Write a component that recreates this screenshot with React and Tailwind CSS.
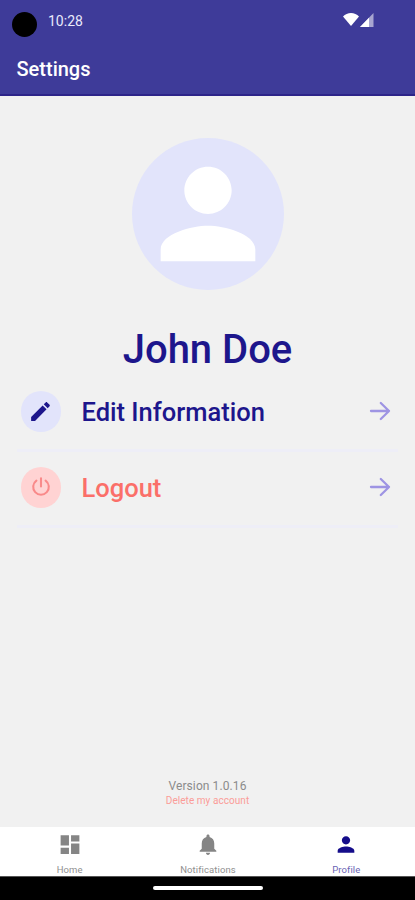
import React from 'react';

const PERSON =
  'M12 12c2.21 0 4-1.79 4-4s-1.79-4-4-4-4 1.79-4 4 1.79 4 4 4zm0 2c-2.67 0-8 1.34-8 4v2h16v-2c0-2.66-5.33-4-8-4z';
const PENCIL =
  'M3 17.25V21h3.75L17.81 9.94l-3.75-3.75L3 17.25zM20.71 7.04c.39-.39.39-1.02 0-1.41l-2.34-2.34c-.39-.39-1.02-.39-1.41 0l-1.83 1.83 3.75 3.75 1.83-1.83z';
const DASHBOARD = 'M3 13h8V3H3v10zm0 8h8v-6H3v6zm10 0h8V11h-8v10zm0-18v6h8V3h-8z';
const BELL =
  'M12 22c1.1 0 2-.9 2-2h-4c0 1.1.89 2 2 2zm6-6v-5c0-3.07-1.64-5.64-4.5-6.32V4c0-.83-.67-1.5-1.5-1.5s-1.5.67-1.5 1.5v.68C7.63 5.36 6 7.92 6 11v5l-2 2v1h16v-1l-2-2z';

function Icon({ path, className }) {
  return (
    <svg viewBox="0 0 24 24" fill="currentColor" className={className}>
      <path d={path} />
    </svg>
  );
}

function ArrowIcon() {
  return (
    <svg
      viewBox="0 0 22 20"
      fill="none"
      stroke="currentColor"
      strokeWidth="2.3"
      strokeLinecap="round"
      strokeLinejoin="round"
      className="w-[22px] h-5 text-[#9e94e3]"
    >
      <path d="M2 10h18M11.8 2l8.2 8-8.2 8" />
    </svg>
  );
}

function PowerIcon() {
  return (
    <svg
      viewBox="0 0 20 20"
      fill="none"
      stroke="currentColor"
      strokeWidth="2.1"
      strokeLinecap="round"
      className="size-5 text-[#f98a8a]"
    >
      <path d="M5.4 3.6a7.8 7.8 0 1 0 9.2 0M10 1.2v8.3" />
    </svg>
  );
}

function SettingsRow({ icon, label, iconClass, labelClass }) {
  return (
    <button
      type="button"
      className="w-full h-[61px] mb-[15px] flex items-start border-b-3 border-[#eeeef7] pl-[3.5px] pr-[7px] text-left"
    >
      <span className={`size-[40.5px] rounded-full flex items-center justify-center shrink-0 ${iconClass}`}>{icon}</span>
      <span className={`ml-[20.5px] flex-1 text-[25.5px] leading-[42px] font-medium whitespace-nowrap ${labelClass}`}>
        {label}
      </span>
      <span className="h-10 flex items-center">
        <ArrowIcon />
      </span>
    </button>
  );
}

function Tab({ path, label, iconClass, labelClass }) {
  return (
    <button type="button" className="flex-1 flex flex-col items-center pt-[5px] pl-px">
      <Icon path={path} className={`size-[26px] ${iconClass}`} />
      <span className={`mt-[6px] text-[9.5px] leading-[13px] tracking-[0.1px] ${labelClass}`}>{label}</span>
    </button>
  );
}

export default function App() {
  return (
    <div className="w-[415px] h-[900px] flex flex-col overflow-hidden bg-[#f1f1f1] font-['Roboto',sans-serif]">
      <header className="h-24 shrink-0 bg-[#3e3b99] border-b-2 border-[#2d2489] text-white">
        <div className="h-[42px] flex items-start pl-3 pr-[41px]">
          <span className="mt-3 size-[25px] rounded-full bg-black" />
          <span className="ml-[11px] mt-3 text-[14px] leading-[18px] text-[#e9e9fb]">10:28</span>
          <svg viewBox="0 0 31 14" fill="currentColor" className="ml-auto mt-[13px] w-[31px] h-[14px]">
            <path d="M0 3.4C2 1.3 5 0 8 0s6 1.3 8 3.4L8 13z" />
            <path d="M17 14 30.5 0v14z" fillOpacity="0.55" />
            <path d="M17 14 26 4.7V14z" />
          </svg>
        </div>
        <h1 className="pl-[16.5px] text-[20px] leading-[55px] font-medium">Settings</h1>
      </header>

      <main className="flex-1 flex flex-col items-center px-[17px]">
        <div className="mt-[42px] size-[152px] shrink-0 rounded-full bg-[#e2e4fb] flex items-center justify-center">
          <Icon path={PERSON} className="size-[142px] text-white" />
        </div>
        <h2 className="mt-[36px] text-[40px] leading-[48px] font-medium text-[#1d168c]">John Doe</h2>
        <div className="mt-[17px] w-full">
          <SettingsRow
            icon={<Icon path={PENCIL} className="size-[25px] text-[#1d168c]" />}
            label="Edit Information"
            iconClass="bg-[#e2e4fb]"
            labelClass="text-[#1d168c]"
          />
          <SettingsRow
            icon={<PowerIcon />}
            label="Logout"
            iconClass="bg-[#ffd3d3]"
            labelClass="text-[#fb6f69]"
          />
        </div>
        <div className="mt-auto mb-[19px] flex flex-col items-center">
          <span className="text-[12px] leading-[15px] tracking-[0.1px] text-[#8b8b8b]">Version 1.0.16</span>
          <button type="button" className="text-[10px] leading-[14px] tracking-[0.05px] text-[#fb9c98]">
            Delete my account
          </button>
        </div>
      </main>

      <nav className="h-[49px] shrink-0 flex bg-white">
        <Tab path={DASHBOARD} label="Home" iconClass="text-[#858585]" labelClass="text-[#909090]" />
        <Tab path={BELL} label="Notifications" iconClass="text-[#858585]" labelClass="text-[#909090]" />
        <Tab path={PERSON} label="Profile" iconClass="text-[#140c8a]" labelClass="text-[#6a64b4]" />
      </nav>
      <div className="h-6 shrink-0 bg-black border-t border-[#555] flex justify-center">
        <span className="mt-[9px] h-1 w-[110px] rounded-full bg-white" />
      </div>
    </div>
  );
}
